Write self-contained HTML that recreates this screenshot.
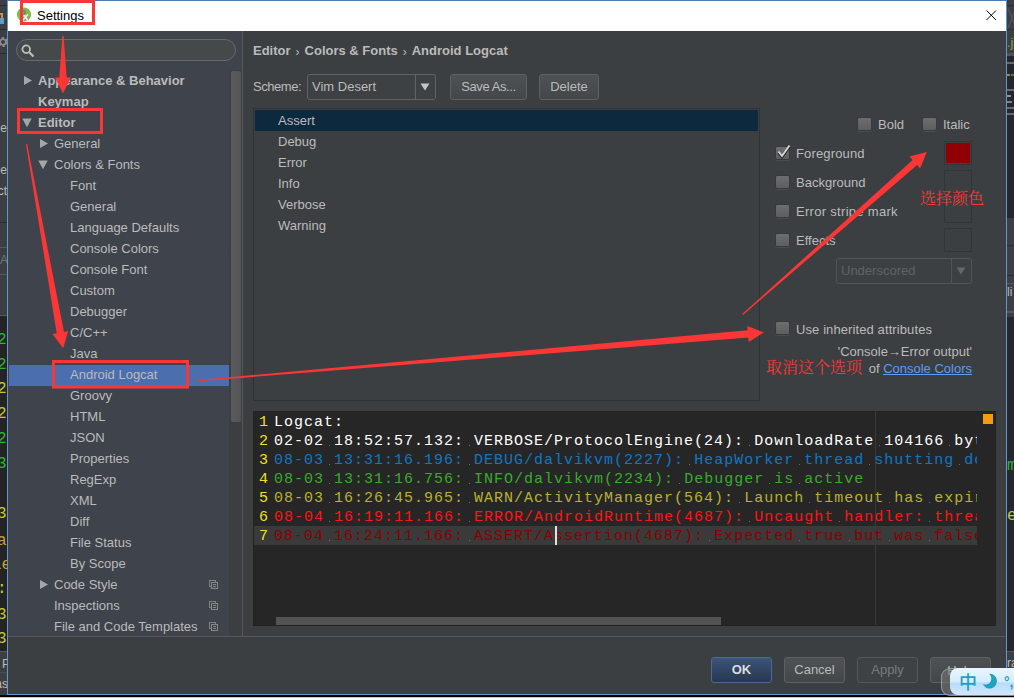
<!DOCTYPE html>
<html><head><meta charset="utf-8"><title>Settings</title>
<style>
html,body{margin:0;padding:0;background:#2b2b2b;}
body{width:1014px;height:698px;position:relative;overflow:hidden;font-family:"Liberation Sans","Noto Sans CJK SC",sans-serif;font-size:13px;color:#bbbbbb;}
.abs{position:absolute;}
.t{position:absolute;white-space:nowrap;}
.b{font-weight:bold;}
#win{position:absolute;left:7px;top:0;width:1000px;height:695px;background:#3c3f41;box-sizing:border-box;border:1px solid #6394d4;border-top-color:#4a7ab8}
#title{position:absolute;left:8px;top:1px;width:998px;height:30px;background:#fff;}
#side{position:absolute;left:8px;top:31px;width:234px;height:605px;background:#3e434c;}
.trow{position:absolute;height:21px;line-height:21px;white-space:nowrap;}
.selbg{position:absolute;left:9px;width:220px;height:21px;background:#4b6eaf;}
.cb{position:absolute;width:15px;height:14px;margin:-1px 0 0 -1px;box-sizing:border-box;border-radius:2px;background:linear-gradient(#6b6d6e,#5c5e5f);border:1px solid #37393b;box-shadow:0 1px 0 #4a4c4e;}
.btn{position:absolute;height:26px;box-sizing:border-box;border:1px solid #5e6162;border-radius:3px;background:linear-gradient(#4e5254,#434749);text-align:center;line-height:24px;}
.mono{position:absolute;left:-3px;font-family:"Liberation Mono",monospace;font-size:16px;line-height:18px;white-space:nowrap}
.sp{background:linear-gradient(#6e6e6e,#6e6e6e) 5px 12px/1px 1px no-repeat}
.ln{position:absolute;left:256px;width:16px;text-align:center;color:#f0e020;font-family:"Liberation Mono",monospace;font-size:15px;letter-spacing:1px;line-height:19px;height:19px;}
.code{position:absolute;left:274px;width:703px;overflow:hidden;white-space:pre;font-family:"Liberation Mono",monospace;font-size:15px;letter-spacing:1px;line-height:19px;height:19px;}
.sep{font-weight:normal;font-size:12px;margin:0 5px 0 5px;position:relative;top:1px}
.cn{font-family:"Noto Serif CJK SC","Noto Sans CJK SC",serif;color:#fb3636;font-size:16px;font-weight:400;}
</style></head><body>
<!-- background IDE strips -->
<div id="bgl" class="abs" style="left:0;top:0;width:8px;height:698px;background:#232525;overflow:hidden;font-size:12px;color:#bbb">
 <div class="abs" style="left:0;top:0;width:8px;height:316px;background:#3c3f41"></div>
 <div class="abs" style="left:0;top:5px;width:8px;height:1px;background:#2b2b2b"></div>
 <div class="abs" style="left:0;top:29px;width:8px;height:1px;background:#2b2b2b"></div>
 <div class="abs" style="left:0;top:53px;width:8px;height:1px;background:#2b2b2b"></div>
 <div class="abs" style="left:0;top:13px;width:3px;height:5px;border-top:2px solid #c8914a;border-right:2px solid #c8914a;box-sizing:border-box"></div>
 <div class="abs" style="left:0;top:18px;width:4px;height:6px;background:#5a9fc8"></div>
 <svg class="abs" style="left:-4px;top:35px" width="14" height="14"><circle cx="7" cy="7" r="3.6" fill="none" stroke="#8c8c8c" stroke-width="2.6" stroke-dasharray="2.2 1.6"/><circle cx="7" cy="7" r="2.8" fill="none" stroke="#8c8c8c" stroke-width="1.6"/></svg>
 <div class="t" style="right:1px;top:120px;line-height:16px">e</div>
 <div class="t" style="right:1px;top:162px;line-height:16px">e</div>
 <div class="t" style="right:1px;top:183px;line-height:16px">ct</div>
 <div class="abs" style="left:0;top:222px;width:8px;height:1px;background:#2b2b2b"></div>
 <div class="abs" style="left:0;top:247px;width:8px;height:1px;background:#555759"></div>
 <div class="t" style="right:0px;top:252px;line-height:16px;color:#6f7274">A</div>
 <div class="abs" style="left:0;top:274px;width:8px;height:1px;background:#555759"></div>
 <div class="abs" style="left:0;top:315px;width:8px;height:1px;background:#555759"></div>
 <div class="mono" style="top:331px;color:#32b432">2</div>
 <div class="mono" style="top:356px;color:#32b432">2</div>
 <div class="mono" style="top:380px;color:#c8c832">2</div>
 <div class="mono" style="top:405px;color:#c8c832">2</div>
 <div class="mono" style="top:430px;color:#32b432">2</div>
 <div class="mono" style="top:455px;color:#32b432">3</div>
 <div class="mono" style="top:505px;color:#c8c832">3</div>
 <div class="mono" style="top:532px;color:#c8a032">a</div>
 <div class="mono" style="top:556px;color:#c8a032;left:-8px">le</div>
 <div class="mono" style="top:580px;color:#c8c832">:</div>
 <div class="mono" style="top:606px;color:#c8c832">3</div>
 <div class="mono" style="top:630px;color:#c8c832">3</div>
 <div class="abs" style="left:0;top:651px;width:8px;height:47px;background:#3c3f41"></div>
 <div class="abs" style="left:0;top:651px;width:8px;height:1px;background:#555759"></div>
 <div class="t" style="left:2px;top:656px;line-height:16px">P</div>
 <div class="abs" style="left:0;top:672px;width:8px;height:1px;background:#4b4d4f"></div>
 <div class="t" style="right:0px;top:676px;line-height:16px">as</div>
</div>
<div id="bgr" class="abs" style="left:1006px;top:0;width:8px;height:698px;background:#262728;overflow:hidden;font-size:12px;color:#bbb">
 <div class="abs" style="left:0;top:0;width:8px;height:56px;background:#3c3f41"></div>
 <div class="abs" style="left:0;top:5px;width:8px;height:1px;background:#2b2b2b"></div>
 <div class="abs" style="left:0;top:29px;width:8px;height:1px;background:#2b2b2b"></div>
 <svg class="abs" style="left:1px;top:8px" width="8" height="20"><path d="M1 0 L9 20 M9 0 L1 20" stroke="#505355" stroke-width="1.5"/></svg>
 <div class="t" style="left:1px;top:35px;line-height:16px;color:#7aa84a;font-size:13px">.ja</div>
 <div class="abs" style="left:0;top:53px;width:8px;height:3px;background:#505355"></div>
 <div class="abs" style="left:1px;top:62px;width:7px;height:2px;background:#6a6a6a"></div>
 <div class="abs" style="left:1px;top:74px;width:3px;height:2px;background:#a08a3a"></div>
 <div class="abs" style="left:5px;top:74px;width:3px;height:2px;background:#6a6a6a"></div>
 <div class="abs" style="left:1px;top:89px;width:7px;height:2px;background:#6a6a6a"></div>
 <div class="abs" style="left:1px;top:95px;width:4px;height:2px;background:#909090"></div>
 <div class="abs" style="left:1px;top:101px;width:5px;height:2px;background:#808080"></div>
 <div class="abs" style="left:1px;top:107px;width:7px;height:2px;background:#6a6a6a"></div>
 <div class="abs" style="left:1px;top:113px;width:7px;height:2px;background:#6a6a6a"></div>
 <div class="abs" style="left:0;top:218px;width:8px;height:99px;background:#3c3f41"></div>
 <div class="abs" style="left:0;top:245px;width:8px;height:1px;background:#2b2b2b"></div>
 <div class="abs" style="left:0;top:275px;width:8px;height:1px;background:#2b2b2b"></div>
 <div class="abs" style="left:0;top:283px;width:8px;height:1px;background:#555759"></div>
 <div class="t" style="left:1px;top:284px;line-height:16px">li</div>
 <div class="abs" style="left:0;top:311px;width:8px;height:2px;background:#555759"></div>
 <div class="mono" style="left:1px;top:457px;color:#32b432">m</div>
 <div class="mono" style="left:1px;top:507px;color:#c8c832">e</div>
 <div class="abs" style="left:0;top:651px;width:8px;height:47px;background:#3c3f41"></div>
 <div class="abs" style="left:0;top:651px;width:8px;height:1px;background:#555759"></div>
 <div class="t" style="left:1px;top:655px;line-height:16px">ra</div>
</div>
<div class="abs" style="left:0;top:695px;width:1014px;height:2px;background:#000"></div><div class="abs" style="left:0;top:697px;width:1014px;height:1px;background:#bcd2bc"></div>

<div id="win"></div>
<div id="title">
  <svg class="abs" style="left:8px;top:5px" width="18" height="20"><circle cx="8" cy="8.5" r="7.1" fill="#7dbb4d"/><path d="M7.6 5.2 L7.6 8.8 L3.4 17 M7.6 8.8 L12.4 16.2" stroke="#d9e4d4" stroke-width="1.2" fill="none" opacity=".85"/><path d="M6.8 14.2 L12 8.2" stroke="#eeeeee" stroke-width="1.5" fill="none"/><path d="M8.6 8.8 L12.2 15.6" stroke="#eeeeee" stroke-width="1.5" fill="none"/><circle cx="7.6" cy="6.6" r="1.7" fill="#7dbb4d" stroke="#66756a" stroke-width="1.1"/></svg>
  <div class="t" style="left:29px;top:0px;line-height:30px;color:#000;font-size:13px">Settings</div>
  <svg class="abs" style="left:978px;top:9px" width="11" height="11"><path d="M0.5 0.5 L10 10 M10 0.5 L0.5 10" stroke="#000" stroke-width="1"/></svg>
</div>
<div id="side"></div>
<div class="abs" style="left:242px;top:31px;width:1px;height:605px;background:#555759"></div>
<div class="abs" style="left:8px;top:636px;width:998px;height:1px;background:#555759"></div>
<!-- search -->
<div class="abs" style="left:16px;top:39px;width:220px;height:22px;box-sizing:border-box;border:1px solid #686b6d;border-radius:11px;background:#45494a"></div>
<svg class="abs" style="left:20px;top:43px" width="16" height="16" fill="none" stroke="#bdbdbd"><circle cx="6.2" cy="6.2" r="3.8" stroke-width="1.8"/><line x1="9" y1="9" x2="13.5" y2="13.5" stroke-width="2.2"/></svg>
<!-- tree scrollbar -->
<div class="abs" style="left:229px;top:70px;width:13px;height:566px;background:#3c3f41"></div>
<div class="abs" style="left:231px;top:71px;width:10px;height:351px;background:linear-gradient(90deg,#5b5c5d,#535455);border-radius:2px"></div>
<div class="trow b" style="top:70px;left:38px">Appearance &amp; Behavior</div>
<svg class="abs" style="left:23px;top:76px" width="10" height="10"><polygon points="1,0 9,4.5 1,9" fill="#a4a7a9"/></svg>
<div class="trow b" style="top:91px;left:38px">Keymap</div>
<div class="trow b" style="top:112px;left:38px">Editor</div>
<svg class="abs" style="left:22px;top:118px" width="10" height="10"><polygon points="0.3,0.6 9.7,0.6 5,9.2" fill="#a4a7a9"/></svg>
<div class="trow" style="top:133px;left:54px">General</div>
<svg class="abs" style="left:39px;top:139px" width="10" height="10"><polygon points="1,0 9,4.5 1,9" fill="#a4a7a9"/></svg>
<div class="trow" style="top:154px;left:54px">Colors &amp; Fonts</div>
<svg class="abs" style="left:38px;top:160px" width="10" height="10"><polygon points="0.3,0.6 9.7,0.6 5,9.2" fill="#a4a7a9"/></svg>
<div class="trow" style="top:175px;left:70px">Font</div>
<div class="trow" style="top:196px;left:70px">General</div>
<div class="trow" style="top:217px;left:70px">Language Defaults</div>
<div class="trow" style="top:238px;left:70px">Console Colors</div>
<div class="trow" style="top:259px;left:70px">Console Font</div>
<div class="trow" style="top:280px;left:70px">Custom</div>
<div class="trow" style="top:301px;left:70px">Debugger</div>
<div class="trow" style="top:322px;left:70px">C/C++</div>
<div class="trow" style="top:343px;left:70px">Java</div>
<div class="selbg" style="top:365px"></div>
<div class="trow sel" style="top:364px;left:70px">Android Logcat</div>
<div class="trow" style="top:385px;left:70px">Groovy</div>
<div class="trow" style="top:406px;left:70px">HTML</div>
<div class="trow" style="top:427px;left:70px">JSON</div>
<div class="trow" style="top:448px;left:70px">Properties</div>
<div class="trow" style="top:469px;left:70px">RegExp</div>
<div class="trow" style="top:490px;left:70px">XML</div>
<div class="trow" style="top:511px;left:70px">Diff</div>
<div class="trow" style="top:532px;left:70px">File Status</div>
<div class="trow" style="top:553px;left:70px">By Scope</div>
<div class="trow" style="top:574px;left:54px">Code Style</div>
<svg class="abs" style="left:39px;top:580px" width="10" height="10"><polygon points="1,0 9,4.5 1,9" fill="#a4a7a9"/></svg>
<svg class="abs" style="left:209px;top:580px" width="10" height="10" fill="none" stroke-width="1"><rect x="0.5" y="0.5" width="6" height="6" stroke="#76838f"/><rect x="2.5" y="2.5" width="6" height="6" fill="#3e434c" stroke="#8a8782"/><line x1="4" y1="4.5" x2="7" y2="4.5" stroke="#8a8782"/><line x1="4" y1="6.5" x2="7" y2="6.5" stroke="#8a8782"/></svg>
<div class="trow" style="top:595px;left:54px">Inspections</div>
<svg class="abs" style="left:209px;top:601px" width="10" height="10" fill="none" stroke-width="1"><rect x="0.5" y="0.5" width="6" height="6" stroke="#76838f"/><rect x="2.5" y="2.5" width="6" height="6" fill="#3e434c" stroke="#8a8782"/><line x1="4" y1="4.5" x2="7" y2="4.5" stroke="#8a8782"/><line x1="4" y1="6.5" x2="7" y2="6.5" stroke="#8a8782"/></svg>
<div class="trow" style="top:616px;left:54px">File and Code Templates</div>
<svg class="abs" style="left:209px;top:622px" width="10" height="10" fill="none" stroke-width="1"><rect x="0.5" y="0.5" width="6" height="6" stroke="#76838f"/><rect x="2.5" y="2.5" width="6" height="6" fill="#3e434c" stroke="#8a8782"/><line x1="4" y1="4.5" x2="7" y2="4.5" stroke="#8a8782"/><line x1="4" y1="6.5" x2="7" y2="6.5" stroke="#8a8782"/></svg>
<!-- right panel -->
<div class="t b" style="left:253px;top:41px;line-height:20px">Editor<span class="sep">&#8250;</span>Colors &amp; Fonts<span class="sep">&#8250;</span>Android Logcat</div>
<div class="t" style="left:253px;top:77px;line-height:20px;letter-spacing:-.45px">Scheme:</div>
<div class="abs" style="left:307px;top:74px;width:129px;height:26px;box-sizing:border-box;border:1px solid #616365;border-radius:3px;background:#3e4143"></div>
<div class="abs" style="left:415px;top:75px;width:1px;height:24px;background:#616365"></div>
<svg class="abs" style="left:420px;top:83px" width="10" height="8"><polygon points="0.5,0.5 9.5,0.5 5,7.5" fill="#c4c4c4"/></svg>
<div class="t" style="left:312px;top:77px;line-height:20px">Vim Desert</div>
<div class="btn" style="left:450px;top:74px;width:77px;letter-spacing:-.4px">Save As...</div>
<div class="btn" style="left:539px;top:74px;width:60px">Delete</div>
<!-- list -->
<div class="abs" style="left:253px;top:108px;width:507px;height:293px;box-sizing:border-box;border:1px solid #2f3133;background:#3c3f41"></div>
<div class="abs" style="left:255px;top:110px;width:503px;height:21px;background:#0d293e"></div>
<div class="t" style="left:278px;top:110px;line-height:21px">Assert</div>
<div class="t" style="left:278px;top:131px;line-height:21px">Debug</div>
<div class="t" style="left:278px;top:152px;line-height:21px">Error</div>
<div class="t" style="left:278px;top:173px;line-height:21px">Info</div>
<div class="t" style="left:278px;top:194px;line-height:21px">Verbose</div>
<div class="t" style="left:278px;top:215px;line-height:21px">Warning</div>
<!-- options -->
<div class="cb" style="left:858px;top:118px"></div><div class="t" style="left:878px;top:115px;line-height:20px">Bold</div>
<div class="cb" style="left:923px;top:118px"></div><div class="t" style="left:943px;top:115px;line-height:20px">Italic</div>
<div class="cb" style="left:776px;top:147px"></div><svg class="abs" style="left:775px;top:144px" width="18" height="18" fill="none"><polyline points="3.5,7.5 7,12 14.5,1.5" stroke="#1a1a1a" stroke-width="2.4" transform="translate(0,1.3)" opacity=".8"/><polyline points="3.5,7.5 7,12 14.5,1.5" stroke="#d6d6d6" stroke-width="1.9"/></svg><div class="t" style="left:796px;top:144px;line-height:20px;letter-spacing:.15px">Foreground</div>
<div class="cb" style="left:776px;top:176px"></div><div class="t" style="left:796px;top:173px;line-height:20px">Background</div>
<div class="cb" style="left:776px;top:205px"></div><div class="t" style="left:796px;top:202px;line-height:20px;letter-spacing:.3px">Error stripe mark</div>
<div class="cb" style="left:776px;top:234px"></div><div class="t" style="left:796px;top:231px;line-height:20px">Effects</div>
<div class="abs" style="left:944px;top:141px;width:28px;height:24px;box-sizing:border-box;border:1px solid #333537;padding:1px"><div style="width:100%;height:100%;background:#900003"></div></div>
<div class="abs" style="left:944px;top:170px;width:28px;height:24px;box-sizing:border-box;border:1px solid #333537"></div>
<div class="abs" style="left:944px;top:199px;width:28px;height:24px;box-sizing:border-box;border:1px solid #333537"></div>
<div class="abs" style="left:944px;top:228px;width:28px;height:24px;box-sizing:border-box;border:1px solid #333537"></div>
<div class="abs" style="left:836px;top:258px;width:136px;height:26px;box-sizing:border-box;border:1px solid #525557;border-radius:3px;background:#3d4042"></div>
<div class="abs" style="left:951px;top:259px;width:1px;height:24px;background:#525557"></div>
<svg class="abs" style="left:956px;top:267px" width="10" height="8"><polygon points="0.5,0.5 9.5,0.5 5,7.5" fill="#646769"/></svg>
<div class="t" style="left:841px;top:261px;line-height:20px;color:#606365">Underscored</div>
<div class="cb" style="left:776px;top:322px"></div><div class="t" style="left:796px;top:320px;line-height:20px;letter-spacing:.1px">Use inherited attributes</div>
<div class="t" style="right:42px;top:342px;line-height:20px">'Console&#8594;Error output'</div>
<div class="t" style="right:42px;top:359px;line-height:20px">of <span style="color:#589df6;text-decoration:underline">Console Colors</span></div>
<div class="t cn" style="left:766px;top:356px;line-height:22px">取消这个选项</div>
<div class="t cn" style="left:920px;top:187px;line-height:22px">选择颜色</div>
<!-- editor preview -->
<div class="abs" style="left:253px;top:411px;width:743px;height:215px;box-sizing:border-box;border:1px solid #222222;background:#262626"></div>
<div class="abs" style="left:875px;top:411px;width:1px;height:214px;background:#3a3a3a"></div>
<div class="ln" style="top:413px">1</div>
<div class="code" style="top:413px;color:#ffffff">Logcat:</div>
<div class="ln" style="top:432px">2</div>
<div class="code" style="top:432px;color:#ffffff">02-02<span class="sp"> </span>18:52:57.132:<span class="sp"> </span>VERBOSE/ProtocolEngine(24):<span class="sp"> </span>DownloadRate<span class="sp"> </span>104166<span class="sp"> </span>bytes<span class="sp"> </span>per<span class="sp"> </span>sec.<span class="sp"> </span>Downloaded<span class="sp"> </span>Bytes<span class="sp"> </span>5643/34714</div>
<div class="ln" style="top:451px">3</div>
<div class="code" style="top:451px;color:#1276c4">08-03<span class="sp"> </span>13:31:16.196:<span class="sp"> </span>DEBUG/dalvikvm(2227):<span class="sp"> </span>HeapWorker<span class="sp"> </span>thread<span class="sp"> </span>shutting<span class="sp"> </span>down</div>
<div class="ln" style="top:470px">4</div>
<div class="code" style="top:470px;color:#3aaa2e">08-03<span class="sp"> </span>13:31:16.756:<span class="sp"> </span>INFO/dalvikvm(2234):<span class="sp"> </span>Debugger<span class="sp"> </span>is<span class="sp"> </span>active</div>
<div class="ln" style="top:489px">5</div>
<div class="code" style="top:489px;color:#b7b32e">08-03<span class="sp"> </span>16:26:45.965:<span class="sp"> </span>WARN/ActivityManager(564):<span class="sp"> </span>Launch<span class="sp"> </span>timeout<span class="sp"> </span>has<span class="sp"> </span>expired,<span class="sp"> </span>giving<span class="sp"> </span>up<span class="sp"> </span>wake<span class="sp"> </span>lock!</div>
<div class="ln" style="top:508px">6</div>
<div class="code" style="top:508px;color:#ff1414">08-04<span class="sp"> </span>16:19:11.166:<span class="sp"> </span>ERROR/AndroidRuntime(4687):<span class="sp"> </span>Uncaught<span class="sp"> </span>handler:<span class="sp"> </span>thread<span class="sp"> </span>main<span class="sp"> </span>exiting<span class="sp"> </span>due<span class="sp"> </span>to<span class="sp"> </span>uncaught<span class="sp"> </span>exception</div>
<div class="abs" style="left:254px;top:526px;width:723px;height:19px;background:#3a3a3a"></div>
<div class="ln" style="top:527px">7</div>
<div class="code" style="top:527px;color:#8b0000">08-04<span class="sp"> </span>16:24:11.166:<span class="sp"> </span>ASSERT/Assertion(4687):<span class="sp"> </span>Expected<span class="sp"> </span>true<span class="sp"> </span>but<span class="sp"> </span>was<span class="sp"> </span>false</div>
<div class="abs" style="left:555px;top:526px;width:2px;height:19px;background:#e0e0e0"></div>
<div class="abs" style="left:983px;top:414px;width:10px;height:10px;background:#f39c12"></div>
<div class="abs" style="left:276px;top:617px;width:445px;height:8px;background:#535353"></div>
<!-- bottom buttons -->
<div class="btn b" style="left:711px;top:657px;width:61px;color:#dddddd;background:linear-gradient(#3b5478,#263851);border-color:#4b6a96">OK</div>
<div class="btn" style="left:784px;top:657px;width:61px">Cancel</div>
<div class="btn" style="left:857px;top:657px;width:61px;color:#777a7c;border-color:#54575a;background:#3e4244">Apply</div>
<div class="btn" style="left:930px;top:657px;width:61px;line-height:26px">Help</div>
<!-- IME bar -->
<div class="abs" style="left:941px;top:668px;width:80px;height:28px;border-radius:9px;background:rgba(120,120,120,.55);border:1px solid rgba(190,190,190,.6);box-sizing:border-box"></div>
<div class="abs" style="left:950px;top:668px;width:70px;height:27px;border-radius:8px 0 0 8px;background:linear-gradient(#eaf5ff 0%,#d6ecff 50%,#b9dcfb 55%,#cfe7fd 100%)"></div>
<div class="t" style="left:959px;top:669px;font-size:18px;line-height:24px;color:#1ea2bd;font-weight:500;font-family:'Noto Sans CJK SC',sans-serif">中</div>
<svg class="abs" style="left:978px;top:670px" width="24" height="24"><path d="M10.94 3.83 A7.4 7.4 0 1 1 4.77 14.04 A6 6 0 0 0 10.94 3.83 Z" fill="#1fa3be"/></svg>
<div class="t" style="left:1004px;top:672px;font-size:14px;line-height:20px;color:#1ea2bd;font-weight:bold">°,</div>
<!-- annotations -->
<svg class="abs" style="left:0;top:0" width="1014" height="698">
<rect x="21.5" y="1.5" width="72" height="22" fill="none" stroke="#fb3636" stroke-width="3"/>
<rect x="18.5" y="109.5" width="83" height="23" fill="none" stroke="#fb3636" stroke-width="3"/>
<rect x="53.5" y="361.5" width="134" height="25.5" fill="none" stroke="#fb3636" stroke-width="3"/>
<polygon fill="#fb3636" points="63.6,35.7 62.4,35.7 59.3,77.4 55.0,77.4 63.0,93.4 71.0,77.4 66.7,77.4"/>
<polygon fill="#fb3636" points="27.1,143.7 25.9,143.9 56.7,333.2 52.5,334.0 63.2,348.3 68.2,331.1 64.0,331.9"/>
<polygon fill="#fb3636" points="198.0,380.1 198.2,381.3 748.3,337.6 748.6,341.9 763.9,332.6 747.3,326.0 747.6,330.3"/>
<polygon fill="#fb3636" points="742.2,314.1 743.0,314.9 917.1,165.1 920.1,168.6 926.8,152.0 909.5,156.6 912.6,160.0"/>
</svg>
</body></html>
